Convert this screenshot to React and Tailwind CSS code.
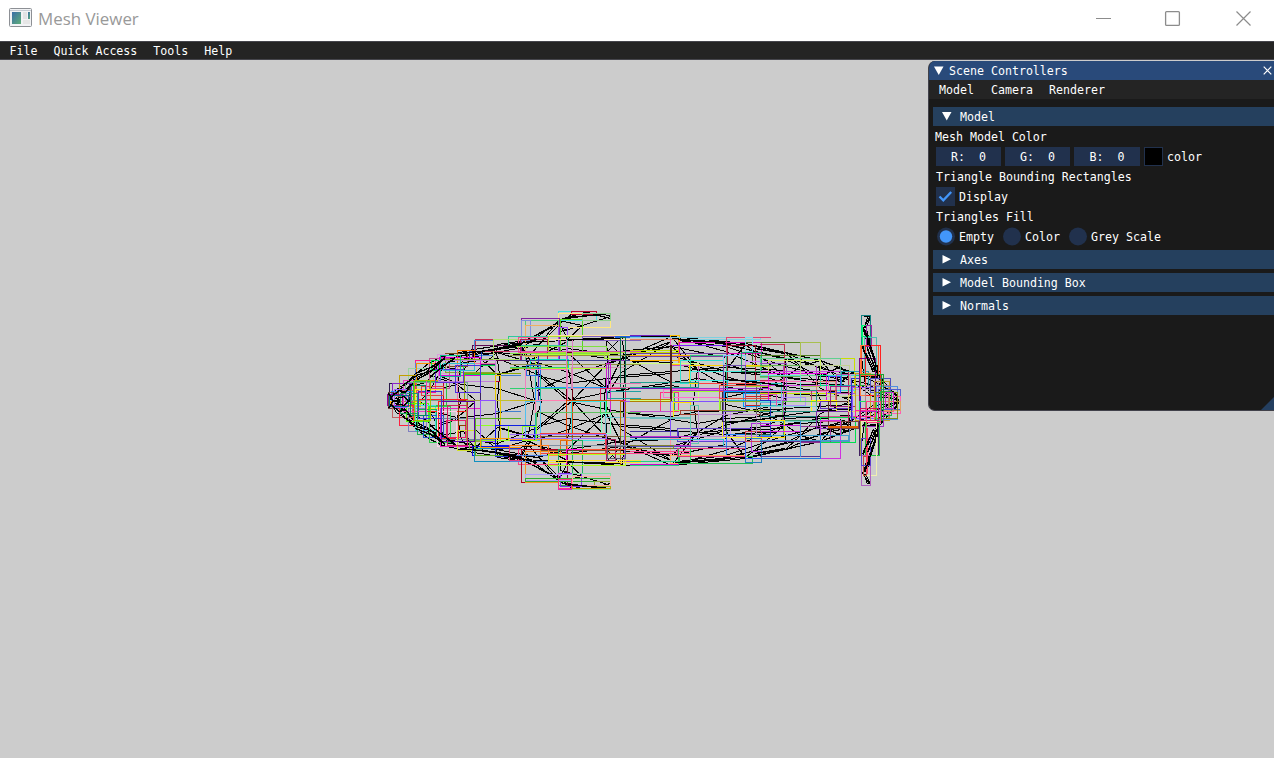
import React from 'react';

// Wireframe edges of the upper half of the hull; the lower half is their reflection.
const AXIS = 801;
const EDGES = `389,400 396,389 405,383 418,371 428,363 442,356 473,349 520,342 567,340 620,336 671,336 745,343 785,352 820,360 851,373 880,377 899,400
389,398 404,385 425,372 440,360 474,353 496,349 537,344 567,352 606,352 622,336
391,402 410,384 432,369 447,362 475,356 522,347 558,321
395,401 414,380 440,366 458,355 497,352 537,356 567,348 621,355 671,346
442,356 430,372 418,378 405,392 398,400
448,358 438,375 428,392 420,400
473,349 461,362 457,384 460,400
475,352 463,370 440,366 425,382 410,386
497,345 496,352 499,374 497,400
473,352 497,374 537,362 568,372 606,388
463,362 497,358 537,374 567,400
520,344 527,361 534,400
522,347 537,372 571,400
537,362 535,380 541,400
475,372 496,352 527,361 567,341
499,374 520,368 537,362
440,376 461,384 497,388 534,400
430,375 457,384 475,400
425,390 440,388 457,384
567,340 567,362 573,399
567,352 606,388 621,358
606,340 607,355 604,400
606,340 621,355 671,382
573,399 606,364 671,341
573,399 606,392 671,382 697,378 725,383 785,386 820,391 851,392
567,352 620,360 671,362 697,369 725,371 785,377 820,383 851,385
606,395 621,372 671,341
622,336 624,369 623,400
671,336 621,358 567,376 537,390
671,336 697,369 693,400
671,346 697,369 725,371 745,344
671,336 725,351 785,377 845,381
675,338 725,343 785,359 820,376 851,377
675,339 720,343 760,352 820,366 851,381
673,338 720,342 750,345 785,352
678,340 725,346 785,366 840,379
725,363 785,383 850,386
700,367 725,376 785,393 850,397
745,343 725,371 725,400
745,344 760,356 785,377
785,352 800,366 820,388 850,400
785,359 784,377 785,400
820,360 800,366 784,377 765,388 725,397
785,352 820,368 851,374
760,347 820,360 860,375 880,378
820,366 816,388 820,400
820,376 840,366 851,382
800,366 820,360 840,382 851,373
851,373 848,388 851,400
840,373 862,376 880,384 897,395
840,377 866,383 899,400
850,380 872,396 893,398
862,386 880,393 897,400
880,378 885,388 893,391 898,398
558,320 566,317 585,312 610,315
558,320 567,339 582,325 610,316
567,318 594,314 610,318
558,320 582,325 560,331 560,341
558,322 522,342 497,348 473,352
560,323 525,340 497,344
561,322 540,343 522,348
558,320 537,346 526,359
572,313 558,324 567,331
863,316 870,316 867,324 863,328 867,342 878,371
863,330 872,353 880,380
869,317 862,329 869,337 867,345
865,325 870,345 879,372
862,345 875,372 878,380
861,357 864,380 868,391
867,317 863,329 866,340 875,360
864,332 876,366
866,345 879,380
606,352 671,346 725,357
621,375 671,371 725,367 785,370
621,389 671,385 697,390 785,392
541,376 567,383 606,378 671,373
671,355 725,371 785,373
697,369 725,386 785,398`;

// Stronger strokes where many edges coincide.
const DENSE = `402,385 418,374 430,371 444,358
430,376 440,368 455,357
391,396 399,390 405,392 411,384
396,398 404,396 409,402
388,393 393,401 400,399
460,353 497,349 522,344
497,348 520,343 537,339
415,373 430,367 445,357
567,339 620,338
678,339 725,342
725,379 760,382 785,386
755,348 785,353
862,347 873,372
864,329 868,340 876,367
867,349 878,376
568,317 600,314`;

// Screen rectangles of single triangles: x1,y1,x2,y2,colour, in thirds of a pixel.
// Each section is [left edge, width, boxes]; a box that reaches a section's edge goes on in the next one.
const SECTIONS = [
  [380, 420, `287,103,440,140,c62a55 278,122,420,165,5c0a50 386,95,440,125,2ecc8a 284,106,341,150,4a86d8 233,136,282,175,ff7a00 269,138,303,166,1838b8
197,145,262,185,7a4a1a 173,148,200,205,d8a0d8 148,160,208,250,c05090 107,166,165,262,ff1493 105,176,180,226,5b7be0 86,190,160,228,98d4a0
58,211,108,258,c0a000 28,235,88,290,2a1a4a 38,236,95,300,8a20c8 34,260,100,288,1e90ff 52,256,115,275,d06060 110,176,176,226,ff8c00
100,228,200,300,30c040 106,252,190,310,ffee20 75,232,262,286,70a890 190,230,360,340,c00030 302,178,345,287,3a2060 197,163,345,202,80a830
250,180,345,208,00e040 233,175,345,285,f070b0 178,158,302,210,e000e0 175,167,345,230,c080d8 165,193,251,232,6030e0 252,205,420,285,8aa800
345,210,420,320,4080d0 345,212,362,405,e8c800 345,285,420,405,c0c030 22,268,68,300,9000a0 25,262,55,310,704040 30,290,120,303,ffb000
38,290,98,338,c06060 58,300,100,361,ff2040 85,310,140,380,8080c0 80,295,145,350,50ff00 106,300,165,375,40e0e0 112,312,170,388,20b050
131,330,190,397,2050d0 149,305,210,412,30d050 115,284,262,320,ff2020 175,288,235,400,ff2020 172,320,228,424,ffd0e8 180,310,300,424,e820c0
185,340,345,402,7080a0 200,345,255,396,e82070 235,285,263,360,904000 260,285,302,410,a0a040 287,360,385,405,90ff20 300,286,345,410,9050ff
345,360,420,422,1010f0 233,375,282,436,d0e030 268,405,305,432,70c050 278,425,388,450,1010e0 283,430,420,470,1090c0 345,430,420,455,2030d0
300,400,420,428,ffa000 285,340,420,450,58b020 185,290,282,410,6000b0 202,300,262,420,d02060 115,260,185,340,4030d0 125,245,190,270,e04040
70,225,140,320,f040c0 90,240,135,330,008a60 104,226,150,345,a0c000 62,265,112,325,20a060 44,254,80,306,a060ff 28,270,84,305,006c94
155,165,175,196,00e050 182,150,240,215,0fbf90 190,174,282,195,30c0d0 226,180,302,262,5030e0 341,104,420,164,b0e070 387,420,420,465,e04080`],
  [510, 390, `145,20,258,45,40e0e0 185,20,258,28,c00030 145,24,301,66,ffe880 151,44,217,142,58d820 218,25,301,46,90d090 35,40,147,165,8020a0
46,46,145,165,50d080 34,46,60,106,8090e0 46,62,145,155,f0b060 145,66,172,165,a050ff 25,97,115,142,ff5090 30,104,112,165,b02050
0,95,172,120,30c8a0 115,91,390,104,ffe0a0 115,93,346,142,b0e030 217,93,390,106,8060c0 315,93,390,98,2060e0 0,125,290,145,80e040
0,138,390,150,d050b0 0,166,172,190,90c820 60,162,175,192,00e0c0 75,147,295,190,b0ff30 75,190,90,400,20c0a0 85,150,170,285,4020c0
0,150,390,166,404090 0,152,390,178,909040 50,180,90,210,3070e0 0,187,170,250,30d070 75,247,290,285,20a0ff 45,192,172,285,f080c0
170,142,187,285,700010 170,104,187,250,e080c0 185,187,346,250,d090b0 295,165,346,250,8030b0 290,176,300,325,d020d0 282,144,330,160,a0e040
272,250,346,285,e02060 272,288,290,325,20e040 292,258,390,280,20a0a0 0,285,170,400,c8b820 45,288,90,405,50c0f0 75,285,170,322,ff80b0
170,285,332,395,d06000 170,287,187,432,e04000 185,288,285,405,40e0e0 80,323,390,394,60c060 275,325,300,385,80ffc0 285,338,390,420,70c0d0
332,288,346,480,b07000 342,288,390,470,a050f0 330,98,346,250,107050 300,235,390,248,e070b0 90,385,285,446,f04040 90,403,150,450,ff9020
0,404,172,450,ffa030 95,395,332,436,705030 150,405,217,432,e07010 0,420,390,433,8090a0 0,360,72,405,1020e0 38,363,80,405,90ff20
0,422,115,470,ff8020 25,432,145,478,ff4080 35,432,145,531,b00020 46,440,145,531,ff9020 0,450,115,470,5080e0 146,432,172,540,20a060
172,432,187,545,800030 187,405,217,505,20b060 145,505,187,553,e020c0 150,505,215,545,8030f0 46,508,187,527,b0a0ff 46,520,300,530,30b030
187,505,301,553,80e0a0 187,541,301,551,c8a000 253,528,301,545,90b030 187,515,301,541,ffb0a0 145,522,185,551,ff3080 170,432,346,480,ff00e0
115,448,346,480,b0ff20 115,465,390,473,ffe030 290,402,315,465,b02060 217,432,390,445,ff5030 292,425,346,460,606070 0,388,290,400,a070ff`],
  [630, 420, `0,92,122,250,7020c0 122,92,148,178,ffc000 120,98,347,120,f060d0 0,98,390,104,80d0e0 0,104,145,176,e08060 147,112,395,145,e000c0
130,120,290,120,8020ff 290,97,420,250,e04070 345,112,366,184,406020 345,97,367,140,80e0f0 292,120,375,235,a01030 0,135,145,142,c0e000
0,144,290,154,7040a0 0,152,180,165,ffb000 0,176,205,285,d0ff80 122,180,206,260,d050c0 182,150,290,250,30c080 150,166,280,235,30e0d0
180,200,420,225,40f0e0 178,180,420,236,ffd000 205,235,420,260,ff4040 0,233,205,248,20a090 280,150,345,250,80c8ff 292,225,420,285,20b0d0
90,262,132,320,20a070 92,262,145,318,ff3080 100,252,282,278,ff70d0 122,250,420,256,a030d0 120,120,124,290,502020 120,290,280,394,8050ff
130,260,268,315,a0ff30 130,292,180,340,ffe000 143,370,365,410,6040d0 0,284,122,290,b08000 180,300,205,415,60c8b0 205,315,300,405,d0a0ff
278,350,420,398,ffff20 278,262,420,350,303030 282,260,420,290,00a0ff 340,265,420,305,00a0ff 345,275,420,300,d02020 150,317,390,327,a04030
378,235,390,378,606060 0,320,120,338,c050d0 0,336,178,340,70c0c0 290,350,420,388,206040 365,355,420,440,b030e0 290,388,345,455,2080ff
120,400,180,452,ff90a0 0,395,180,420,c030d0 0,403,280,425,30c0d0 0,424,345,430,5050b0 0,438,182,445,ff4090 120,450,345,475,ffb060
0,470,145,482,20d080 0,477,145,477,d000d0 145,430,180,476,20d050 147,455,367,475,20c050 345,400,395,472,2080c0 143,430,345,455,e03080
345,395,420,460,3060ff 0,422,130,430,808030 0,380,145,398,4030a0 347,170,420,240,d080ff 335,142,395,200,20a070 390,150,420,216,60d090
345,185,420,245,b0d030 280,180,345,320,7050b0 268,240,420,280,e05040 270,290,420,315,80b020 345,380,395,408,d04050 205,328,378,395,c090d0`],
  [760, 450, `0,112,182,150,508020 120,112,182,245,a8c050 0,118,72,225,c03050 0,160,284,265,c8e000 0,160,242,210,60d090 25,165,180,240,d0f060
0,175,80,285,9050c0 70,182,170,350,b040c0 0,182,120,215,60b050 0,200,265,240,d040e0 25,205,200,290,e000e0 120,182,268,275,c0d090
180,210,300,242,00e090 205,212,285,255,40e0d0 205,215,240,262,4040ff 0,210,120,290,60e0e0 0,228,205,258,ff70c0 230,208,285,265,c050b0
168,228,225,290,e08070 155,255,230,320,b04060 155,287,230,318,ffff00 180,290,275,310,6030c0 212,245,285,305,a02080 0,236,65,300,20c0c0
0,257,168,320,209080 0,255,65,292,60b0e0 0,267,48,305,e050b0 65,277,135,300,b090ff 0,285,30,398,2030c0 68,290,168,345,60c850
0,305,170,350,80d0d0 0,335,170,347,208080 70,346,245,390,40a070 0,345,72,398,ffe000 0,362,120,380,d020e0 120,365,268,410,6090c0
120,365,210,412,903090 168,318,285,370,8030b0 180,335,300,350,d05090 180,338,285,412,00e050 205,290,265,370,603030 182,345,242,460,d030e0
0,410,182,455,5a3090 120,350,122,455,4090e0 0,390,182,460,2080e0 0,405,265,390,40a0d0 206,365,300,368,e06000 265,200,300,350,c02060
270,208,355,252,c0a0d0 278,248,345,340,9050ff 245,200,325,240,20a0b0 265,270,345,320,e0d060 275,220,300,350,3030d0 285,205,330,345,c0a020
305,31,332,122,108080 305,60,334,95,00e080 307,62,320,122,00ff70 320,60,334,125,a020a0 312,98,350,210,50c0b0 305,122,355,210,ff6030
300,122,361,270,ff8040 316,122,361,270,ff2020 300,208,370,240,30b030 298,160,345,345,800080 315,240,385,345,b08090 330,220,390,262,5050c0
342,228,388,345,c0a030 350,245,412,342,5090e0 355,253,421,312,5060d0 345,275,420,326,ff60b0 370,288,420,315,e0a060 345,262,412,340,809010
360,260,395,332,20b050 340,290,400,320,f07070 365,208,371,345,20a030 375,262,400,310,c030d0 298,290,350,350,20e060 285,315,345,335,ff20a0
298,320,370,365,a030c0 298,350,355,450,402060 302,350,318,452,a0a040 316,350,358,450,20c040 305,350,350,510,f0f0b0 305,450,332,540,b060c0
310,455,320,510,c05040 305,400,330,480,6040d0 318,370,322,505,ff4060 300,310,355,345,cc1060 320,290,362,352,ff4080 245,350,295,370,804040`],
];

const pairs = (s) => s.trim().split(/\s+/).map((p) => p.split(',').map(Number));
const polyline = (pts, flip) =>
  pts.map(([x, y], i) => `${i ? 'L' : 'M'}${x + 0.5} ${(flip ? AXIS - y : y) + 0.5}`).join('');
const bothHalves = (s) =>
  s.split('\n').map((l) => polyline(pairs(l), false) + polyline(pairs(l), true)).join('');

const boxes = SECTIONS.flatMap(([left, width, text]) =>
  text.trim().split(/\s+/).map((item) => {
    const [a, b, c, d, color] = item.split(',');
    const px = (v, o) => o + Math.floor(Number(v) / 3) + 0.5;
    const x1 = px(a, left);
    const x2 = px(c, left);
    const y1 = px(b, 305);
    const y2 = px(d, 305);
    let path = `M${x1 - 0.5} ${y1}H${x2 + 0.5}M${x1 - 0.5} ${y2}H${x2 + 0.5}`;
    if (Number(a) > 0) path += `M${x1} ${y1}V${y2}`;
    if (Number(c) < width) path += `M${x2} ${y1}V${y2}`;
    return { path, color: '#' + color };
  })
);

function Mesh() {
  return (
    <svg width="520" height="190" viewBox="385 305 520 190" shapeRendering="crispEdges" fill="none" strokeWidth="1">
      <path d={bothHalves(EDGES)} stroke="#000" />
      {boxes.map((r, i) => (
        <path key={i} d={r.path} stroke={r.color} />
      ))}
      <path d={bothHalves(DENSE)} stroke="#000" strokeWidth="1.4" />
    </svg>
  );
}

function TitleBar() {
  return (
    <div className="flex h-[41px] shrink-0 items-start bg-white">
      <svg className="ml-[9px] mt-2" width="23" height="19" viewBox="0 0 23 19">
        <defs>
          <linearGradient id="pane" x1="0" y1="0" x2="1" y2="1">
            <stop offset="0" stopColor="#3a6ea8" />
            <stop offset="1" stopColor="#5fae78" />
          </linearGradient>
        </defs>
        <rect x=".5" y=".5" width="22" height="18" rx="1" fill="#f2f3f5" stroke="#8d9095" />
        <path d="M1 2.5H22" stroke="#c5cbd3" />
        <rect x="3" y="4" width="9" height="12" fill="url(#pane)" />
        <rect x="14" y="4" width="4" height="7" fill="#e2e3e5" />
        <rect x="14" y="12" width="7" height="4" fill="#e6e6e6" />
        <rect x="19" y="4" width="2" height="7" fill="url(#pane)" />
      </svg>
      <div className="ml-[6px] mt-[7px] whitespace-nowrap font-['Open_Sans',sans-serif] text-[16.9px] leading-6 text-[#999]">Mesh Viewer</div>
      <svg className="ml-auto mr-[22px] mt-[10px]" width="156" height="17" viewBox="0 0 156 17" fill="none" stroke="#8c8c8c">
        <path d="M0 8.5H15" />
        <rect x="69.6" y="1.6" width="13.8" height="13.8" rx="1" strokeWidth="1.3" />
        <path d="M140.5 1.5L154.5 15.5M154.5 1.5L140.5 15.5" strokeWidth="1.2" />
      </svg>
    </div>
  );
}

function Header({ children, open }) {
  return (
    <div className="flex h-[19px] items-center bg-[#25405e] pl-[9px]">
      <svg width="10" height="10" viewBox="0 0 10 10" fill="#fff">
        {open ? <path d="M0 0H9.5L4.75 8.5Z" /> : <path d="M.5 0V8.5L9 4.25Z" />}
      </svg>
      <span className="ml-2 pt-px">{children}</span>
    </div>
  );
}

function Channel({ label, wide }) {
  return (
    <div className={`flex h-[19px] items-center justify-center whitespace-pre bg-[#21314d] pt-px ${wide ? 'w-[66px]' : 'w-[65px]'}`}>
      {label}:{'  '}0
    </div>
  );
}

function Radio({ label, on, className }) {
  return (
    <div className={`flex items-center ${className}`}>
      <svg width="19" height="19" viewBox="0 0 19 19">
        <circle cx="9" cy="9.5" r="9" fill="#21314d" />
        {on && <circle cx="9" cy="9.5" r="6.2" fill="#4296fa" />}
      </svg>
      <span className="ml-[3px] pt-px">{label}</span>
    </div>
  );
}

function ScenePanel() {
  return (
    <div className="absolute left-[928px] top-[1px] h-[350px] w-[346px] overflow-hidden rounded-l-[7px] border-b border-l border-[#41414a] bg-[#1a1a1a]">
      <div className="flex h-[19px] items-center bg-[#294a7a] pl-[5px] pr-[2px]">
        <svg width="10" height="10" viewBox="0 0 10 10" fill="#fff"><path d="M0 .5H9.5L4.75 9Z" /></svg>
        <span className="ml-[5px] pt-px">Scene Controllers</span>
        <svg className="ml-auto" width="9" height="9" viewBox="0 0 9 9" stroke="#fff" strokeWidth="1.2"><path d="M.7 .7L8.3 8.3M8.3 .7L.7 8.3" /></svg>
      </div>
      <div className="flex h-[19px] items-center gap-4 bg-[#242424] pl-[10px] pt-px">
        <span className="w-[36px]">Model</span>
        <span className="w-[42px]">Camera</span>
        <span>Renderer</span>
      </div>
      <div className="flex flex-col pl-1 pt-2">
        <Header open>Model</Header>
        <div className="mt-[3px] flex h-[15px] items-center pl-[2px] pt-px">Mesh Model Color</div>
        <div className="mt-[3px] flex items-center gap-1 pl-[3px]">
          <Channel label="R" />
          <Channel label="G" />
          <Channel label="B" wide />
          <div className="h-[19px] w-[19px] border border-[#21314d] bg-black" />
          <span className="pt-px">color</span>
        </div>
        <div className="mt-[3px] flex h-[15px] items-center pl-[3px] pt-px">Triangle Bounding Rectangles</div>
        <div className="mt-[3px] flex h-[19px] items-center gap-1 pl-[3px]">
          <svg width="19" height="19" viewBox="0 0 19 19" fill="none">
            <rect width="19" height="19" fill="#21314d" />
            <path d="M3.5 9.5L7.3 13.3L15.2 5" stroke="#4296fa" strokeWidth="2.3" />
          </svg>
          <span className="pt-px">Display</span>
        </div>
        <div className="mt-[3px] flex h-[15px] items-center pl-[3px] pt-px">Triangles Fill</div>
        <div className="mt-[3px] flex h-[19px] items-center pl-[4px]">
          <Radio label="Empty" on className="w-[66px]" />
          <Radio label="Color" className="w-[66px]" />
          <Radio label="Grey Scale" className="" />
        </div>
        <div className="mt-1 flex flex-col gap-1">
          <Header>Axes</Header>
          <Header>Model Bounding Box</Header>
          <Header>Normals</Header>
        </div>
      </div>
      <svg className="absolute bottom-0 right-0" width="13" height="13" viewBox="0 0 13 13"><path d="M13 0V13H0Z" fill="#243f60" /></svg>
    </div>
  );
}

export default function App() {
  return (
    <div className="flex h-[758px] w-[1274px] flex-col overflow-hidden bg-[#ccc] font-['DejaVu_Sans_Mono',monospace] text-[11.627px] leading-[13px] text-white">
      <TitleBar />
      <div className="flex h-[19px] shrink-0 items-center gap-4 whitespace-nowrap border-y border-[#45454c] bg-[#242424] pl-[9.5px] pt-px">
        <span>File</span>
        <span>Quick Access</span>
        <span>Tools</span>
        <span>Help</span>
      </div>
      <div className="relative flex-1 pl-[385px] pt-[245px]">
        <Mesh />
        <ScenePanel />
      </div>
    </div>
  );
}
